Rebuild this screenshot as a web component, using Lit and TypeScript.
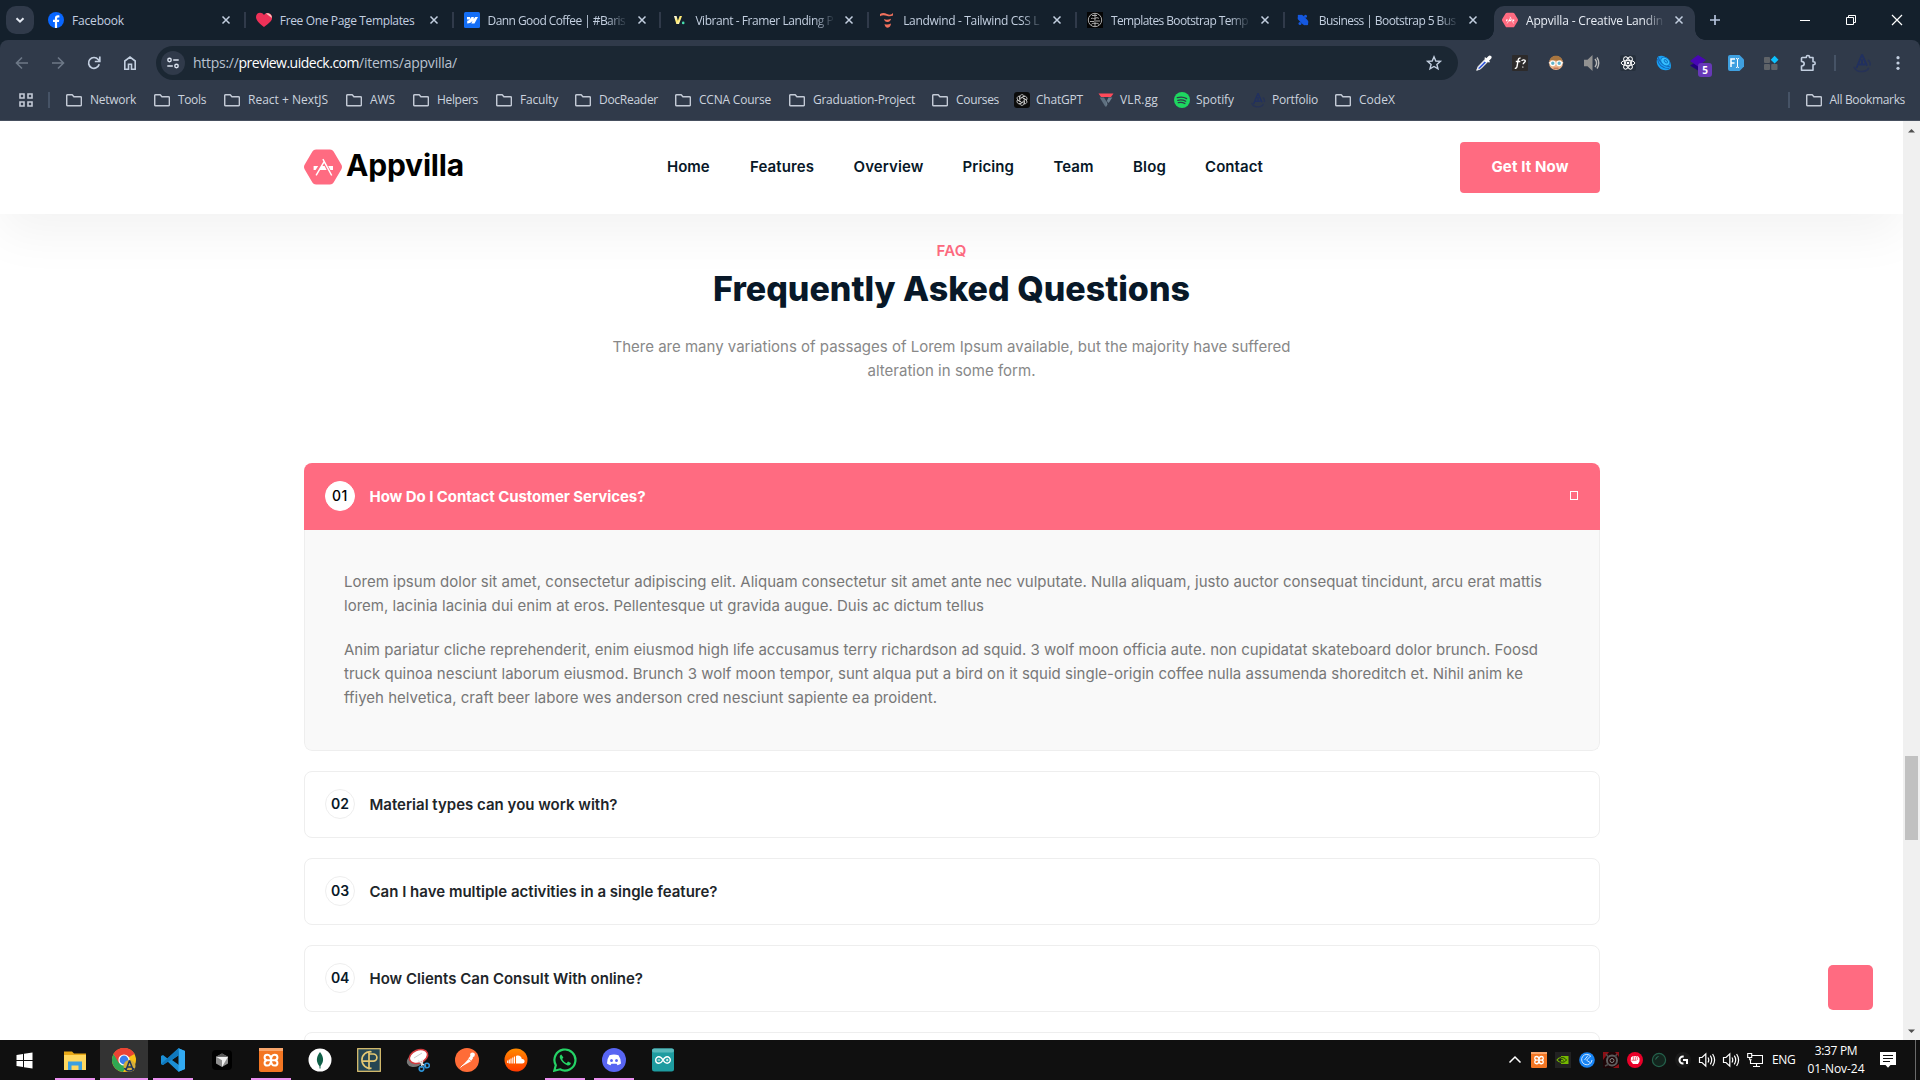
import { LitElement, html, css, svg, nothing, TemplateResult } from "lit";
import { customElement, property } from "lit/decorators.js";
import { classMap } from "lit/directives/class-map.js";
import { styleMap } from "lit/directives/style-map.js";

/** Inline text whose tracking is adjusted so that it spans `width` pixels. */
@customElement("fit-text")
class FitText extends LitElement {
  @property({ type: Number }) width = 0;
  @property() text = "";
  static styles = css`
    :host { display: inline-block; white-space: pre; }
    .run { display: inline-block; }
  `;
  render() {
    return html`<span class="run">${this.text}</span>`;
  }
  updated() {
    const run = this.renderRoot.querySelector<HTMLElement>(".run")!;
    run.style.letterSpacing = "0px";
    if (this.width > 0) {
      const natural = run.getBoundingClientRect().width;
      run.style.letterSpacing = `${(this.width - natural) / this.text.length}px`;
    }
  }
}

const fit = (text: string, width: number) =>
  html`<fit-text .text=${text} .width=${width}></fit-text>`;

type Art = ReturnType<typeof svg>;
const icon = (size: number, box: string, art: Art): TemplateResult =>
  html`<svg width=${size} height=${size} viewBox=${box} fill="none">${art}</svg>`;

const hexMark = (size: number) => icon(size, "0 0 38 38", svg`
  <path d="M12 1.500h14q2.400 0 3.600 2l7.800 13.300q1.200 2.200 0 4.400l-7.800 13.300q-1.200 2-3.600 2h-14q-2.400 0-3.600-2l-7.800-13.300q-1.200-2.200 0-4.400l7.800-13.300q1.200-2 3.600-2z" fill="#ff6b81"/>
  <path d="M9.600 18h4.600l-2.600 4h-2zM24.200 18h4.800v4h-2.600zM17.600 18h3l2 4h-7.400z" fill="#fff"/>
  <path d="M20.300 13.300l-8.200 14M18.900 11.200l8.800 16.300" stroke="#fff" stroke-width="1.500"/>`);

const asMark = (size: number) => icon(size, "0 0 16 16", svg`
  <path d="M8 1.200L3.600 12M8 1.200l4 9M5.500 9.200h5M8 5v4" stroke="#21305f" stroke-width="1.500"/>
  <path d="M1.600 11c1 3 3.300 4 6.400 3.800s5-1.400 5.300-3M12.800 5.500c1.500 1.200 2 3 1.600 4.600" stroke="#263257" stroke-width="1.200"/>`);

const folder = icon(16, "0 0 16 16", svg`<path d="M1.600 2.700h4.600l1.700 2h6.500q1 0 1 1v7q0 1-1 1H1.700q-1 0-1-1v-9q0-1 .9-1z" stroke="#c3cad6" stroke-width="1.500" stroke-linejoin="round"/>`);

const xampp = (size: number) => icon(size, "0 0 24 24", svg`
  <rect width="24" height="24" rx="2" fill="#f37623"/><rect x="0" y="0" width="24" height="3" fill="#f9a66c"/>
  <path d="M8 12.200c-3.300-.6-3.300-5.400.3-5.400 2.200 0 3.600 2 3.700 5.400-.1 3.400-1.500 5.400-3.700 5.400-3.600 0-3.600-4.800-.3-5.400M16 12.200c3.300-.6 3.300-5.400-.3-5.400-2.200 0-3.600 2-3.700 5.400.1 3.400 1.500 5.400 3.700 5.400 3.600 0 3.600-4.800.3-5.400M8 12.200h8" stroke="#fff" stroke-width="2"/>`);

const favicon: Record<string, TemplateResult> = {
  facebook: icon(16, "0 0 16 16", svg`<circle cx="8" cy="8" r="8" fill="#0866ff"/><path d="M6.900 15.900V10H5V7.700h1.900V6.500c0-2.200 1-3.200 3.100-3.200.5 0 1.100.1 1.400.2v2h-.9c-1 0-1.400.4-1.400 1.300v.9h2.200L10.900 10H9.100v5.900z" fill="#fff"/>`),
  heart: icon(16, "0 0 16 16", svg`<path d="M8 15C3.500 11.500 0 8.500 0 5c0-5 6-5.500 8-2 1-1.800 3-2.600 5-1.800C17 3 17 7 14.500 9.500 12.500 11.500 10 13.500 8 15z" fill="#ee3158"/><path d="M10 1.500c2.500-.7 6 1 5.800 4.500z" fill="#f7c5bd"/>`),
  webflow: icon(16, "0 0 16 16", svg`<rect width="16" height="16" rx="1.500" fill="#146ef5"/><path d="M14 5l-3.500 6.500H7.300l1.300-2.800C7.500 10.300 5.800 11.300 3.200 11.500V8.700s1.600-.1 2.600-1.200H3V5h3.100v2L7.500 5h2.300v2L11.200 5z" fill="#fff"/>`),
  vibrant: icon(16, "0 0 16 16", svg`<defs><linearGradient id="vg" x1="0" y1="0" x2="1" y2="1"><stop stop-color="#fff"/><stop offset=".5" stop-color="#ffe96a"/><stop offset="1" stop-color="#fff"/></linearGradient></defs><path d="M3 4h2.600l1.300 4.700L8.700 4H11L8 12H5.300z" fill="url(#vg)"/><circle cx="12.200" cy="10.900" r="1.300" fill="#47e0b0"/>`),
  landwind: icon(16, "0 0 16 16", svg`<path d="M1 2q3.200-2 7 0t6-1v2.500q-3 1.500-6.500.2T1 4.200zM5 7q2.500 1.500 7-.2-.4 3-3.500 3.200Q5.500 10 5 7zM5.500 12q3 1.300 6.500-.4-.5 4-3.200 4.200Q6 15.500 5.500 12z" fill="#f0705c"/>`),
  templates: icon(16, "0 0 16 16", svg`<rect width="16" height="16" fill="#050505"/><circle cx="8" cy="8" r="6.700" stroke="#aaa"/><path d="M8 1.500v13M5 3.500h5M4 6.500c2-1 3 1 4 0s3-1 4 0M3 9.500h4M9 9h4M4.500 12.500c1-2 2-1 3.500-1s2.500-1 4 1" stroke="#aaa"/>`),
  business: icon(16, "0 0 16 16", svg`<rect x="2" y="4.800" width="12" height="6.400" rx="3.200" transform="rotate(45 8 8)" fill="#1558e0"/><circle cx="10.500" cy="4.200" r="1.500" fill="#1558e0"/><circle cx="5" cy="11.500" r="1.500" fill="#1558e0"/><circle cx="4" cy="4" r="1.300" fill="#1558e0"/><circle cx="11.900" cy="11.900" r="1.300" fill="#1558e0"/>`),
  appvilla: hexMark(16),
  gpt: icon(16, "0 0 16 16", svg`<rect width="16" height="16" rx="3" fill="#0b0b0b"/>${[0, 60, 120, 180, 240, 300].map(a => svg`<path transform="rotate(${a} 8 8)" d="M5.900 8.500V4.800q.1-2 2-2.200 1.600 0 2.400 1.400L7.200 5.800" stroke="#d5d5d5" stroke-width=".8"/>`)}`),
  vlr: icon(16, "0 0 16 16", svg`<path d="M.5 1.500h15L13 5H3z" fill="#ff4a5a"/><path d="M1.700 5.500h4.300L9.500 11l-2 4z" fill="#5f7080"/><path d="M14.300 5.500H10.500L8.800 9l1.900 2zM8 9.500l1.500 2.800L8.300 15z" fill="#6f8090"/>`),
  spotify: icon(16, "0 0 16 16", svg`<circle cx="8" cy="8" r="8" fill="#1ed760"/><path d="M3.300 5.700c3.200-.9 6.700-.6 9.300.9M3.800 8.300c2.700-.7 5.600-.4 7.900.9M4.300 10.700c2.200-.5 4.600-.3 6.600.8" stroke="#2f3a4a" stroke-width="1.300" stroke-linecap="round"/>`),
  portfolio: asMark(16),
};

const closeX = icon(16, "0 0 16 16", svg`<path d="M4.500 4.500l7 7M11.500 4.500l-7 7" stroke="#c3cfe0" stroke-width="1.500"/>`);

const tabs: [string, string, number][] = [
  ["facebook", "Facebook", 52],
  ["heart", "Free One Page Templates", 134.500],
  ["webflow", "Dann Good Coffee | #Baris", 137.500],
  ["vibrant", "Vibrant - Framer Landing P", 138],
  ["landwind", "Landwind - Tailwind CSS L", 136],
  ["templates", "Templates Bootstrap Temp", 137],
  ["business", "Business | Bootstrap 5 Bus", 137],
  ["appvilla", "Appvilla - Creative Landin", 137],
];

/* [icon, label, label width, distance to the next item] */
const bookmarks: [string, string, number, number][] = [
  ["folder", "Network", 46, 88], ["folder", "Tools", 28, 70], ["folder", "React + NextJS", 80, 122],
  ["folder", "AWS", 25, 67], ["folder", "Helpers", 41, 83], ["folder", "Faculty", 38, 79],
  ["folder", "DocReader", 59, 100], ["folder", "CCNA Course", 72, 114],
  ["folder", "Graduation-Project", 102, 143], ["folder", "Courses", 43, 82],
  ["gpt", "ChatGPT", 47, 84], ["vlr", "VLR.gg", 38, 76], ["spotify", "Spotify", 38, 76],
  ["portfolio", "Portfolio", 46, 85], ["folder", "CodeX", 36, 60],
];

const extensions: TemplateResult[] = [
  icon(16, "0 0 16 16", svg`<path d="M9.700 3.800L2.300 11.400.7 15.300l4-1.500 7.500-7.600z" fill="#fff" stroke="#f4f4f4"/><path d="M8.600 6.500L3 12.300l-.8 1.900 1.800-.8 6-6z" fill="#2f55d8"/><path d="M8.200 3l4.800 4.800 1-1-1-1 2-2Q16.300 2 15 .9q-1.400-1-2.700.3l-2 2-1-1z" fill="#fff"/>`),
  icon(16, "0 0 16 16", svg`<rect width="16" height="16" rx="1" fill="#2d2b2b"/><path d="M8.600 3.200C6.800 2.700 6.300 4 6 6L5 11.500c-.2 1.500-1 2-2.200 1.600M3.800 6.500h4.500M9.800 6c.3-1.700 3.800-1.500 3.400.3-.3 1.200-1.900 1.300-2 2.900M10.900 11.700l-.1.800" stroke="#fff" stroke-width="1.400"/>`),
  icon(16, "0 0 16 16", svg`<circle cx="8" cy="8" r="7" fill="#eab48a"/><path d="M1.300 6.500C2 2.500 5 .7 8 .7s6 1.800 6.700 5.800l-2-1.500L9 5.800 3 5z" fill="#a8753f"/><circle cx="4.800" cy="8.300" r="2.300" fill="#63b3c8" stroke="#fff" stroke-width="1.200"/><circle cx="11.200" cy="8.300" r="2.300" fill="#63b3c8" stroke="#fff" stroke-width="1.200"/><path d="M.8 7.800h1.500M13.700 7.800h1.500" stroke="#fff"/><path d="M5.500 13.200h5" stroke="#b55e45"/>`),
  icon(16, "0 0 16 16", svg`<path d="M0 4.700h3.500l5-4.700v16l-5-4.700H0z" fill="#929292"/><path d="M11 4q3.200 4 0 8M13 2.500q3.500 5.500 0 11" stroke="#b9b9b9" stroke-width="1.400"/>`),
  icon(16, "0 0 16 16", svg`<rect width="16" height="16" rx="2" fill="#26303d"/><circle cx="8" cy="8" r="1.300" fill="#fff"/><g stroke="#fff"><ellipse cx="8" cy="8" rx="6.800" ry="2.700"/><ellipse cx="8" cy="8" rx="6.800" ry="2.700" transform="rotate(60 8 8)"/><ellipse cx="8" cy="8" rx="6.800" ry="2.700" transform="rotate(120 8 8)"/></g>`),
  icon(16, "0 0 16 16", svg`<path d="M2 1.500C6 0 9 1.200 12 4.300c3 3 3.600 6.300 2.300 9.700-4 2.500-9 1.300-11.500-2S0 5 2 1.500z" fill="#18a2f5"/><path d="M1.500 4c.5 5.500 5 9.500 11.700 9.800M2 2c1.500 5 6 9 12 10" stroke="#1565b8" stroke-width="1.100"/><ellipse cx="9.300" cy="6.500" rx="5" ry="3.700" transform="rotate(42 9.300 6.500)" fill="#38c0ff" stroke="#0d77c8"/><ellipse cx="9.800" cy="6.300" rx="2" ry="1.200" transform="rotate(42 9.800 6.300)" stroke="#0d77c8"/>`),
  html`<span class="ext-badge">${icon(16, "0 0 16 16", svg`<path d="M8 6l8 4.500-8 5-8-5z" fill="#21007a"/><path d="M8 0l8 5-8 6.500L0 6z" fill="#4806b4"/>`)}<b class="badge">5</b></span>`,
  icon(16, "0 0 16 16", svg`<path d="M2 0h9.500L16 4.500v7L11.500 16H2q-2 0-2-2V2q0-2 2-2z" fill="#3fa0e0"/><path d="M3 12V4h4M3 8h3.500" stroke="#fff" stroke-width="1.500"/><path d="M8 3.500q1.500 0 1.500 1v7q0 1-1.500 1M11 3.500q-1.500 0-1.500 1v7q0 1 1.500 1" stroke="#fff"/>`),
  icon(16, "0 0 16 16", svg`<rect x="0" y="2" width="6" height="6" rx="1" fill="#5f6368"/><rect x="0" y="9" width="6" height="6" rx="1" fill="#5f6368"/><rect x="7.200" y="9" width="6.300" height="6" rx="1" fill="#5f6368"/><path d="M10.600.8l3.900 3.900-3.900 3.900-3.900-3.900z" fill="#0cc1ff"/>`),
  icon(20, "0 0 20 20", svg`<path d="M4.300 4.500h4V4q0-1.500 1.600-1.500T11.500 4v.5H15v4.200h.6q1.600 0 1.600 1.500t-1.600 1.500H15v5.500H3.500V13q2.700 0 2.700-2.200T3.500 8.500V5.300q0-.8.8-.8z" stroke="#c3cfe0" stroke-width="1.600" stroke-linejoin="round"/>`),
];

const speaker = icon(18, "0 0 18 18", svg`<path d="M1.500 6.500H4l3.800-3.700v12.400L4 11.500H1.500z" stroke="#fff" stroke-width="1.200"/><path d="M10 6.500q1.500 2.500 0 5M12.300 4.700q2.800 4.300 0 8.600M14.600 3q4 6 0 12" stroke="#fff" stroke-width="1.200"/>`);

/* [art, running, focused] */
const apps: [TemplateResult, boolean, boolean][] = [
  [icon(24, "0 0 24 24", svg`<path d="M1 3.500h8l2 2h12V22H1z" fill="#e8a817"/><path d="M1 7h22v15H1z" fill="#ffd75e"/><path d="M5 13.500h14V22h-3.500v-4.500h-7V22H5z" fill="#3b9fe0"/>`), true, false],
  [icon(24, "0 0 24 24", svg`<circle cx="12" cy="12" r="12" fill="#fbc116"/><path d="M12 12L1.600 6A12 12 0 0 1 22.400 6z" fill="#ea4335"/><path d="M1.600 6A12 12 0 0 0 11 24l5.500-9.500L7 13z" fill="#30a853"/><path d="M12 6h10.400q-3-6-10.400-6T1.600 6l5.200 9z" fill="#ea4335"/><circle cx="12" cy="12" r="5.600" fill="#fff"/><circle cx="12" cy="12" r="4.400" fill="#3b7ded"/><circle cx="17.500" cy="18" r="6" fill="#d6ae3b"/><path d="M17.500 12.500L14 22M17.500 12.500l3.500 9M14.500 19h6M12.500 20c2 4 8 4 9.500 0" stroke="#20355c" stroke-width="1.500"/>`), true, true],
  [icon(24, "0 0 24 24", svg`<path d="M17.500.2L24 3v18l-6.500 2.800-11-10.300L2 17 0 16V8l2-1 4.500 3.500zM18 7l-7 5 7 5z" fill="#1b8fd6" fill-rule="evenodd"/><path d="M17.500.2L24 3v18l-6.500 2.800z" fill="#32aaf2"/><path d="M0 16l17.500-15.800L18 7 2 17z" fill="#0f78bd"/>`), true, false],
  [icon(24, "0 0 24 24", svg`<rect x="2" y="2" width="20" height="20" rx="4" fill="#000"/><path d="M12 5.500l6 3.300v6.800L12 19l-6-3.400V8.800z" fill="#8d8d8d"/><path d="M6 8.800h12L12 19v-6.700z" fill="#efefef"/><path d="M6 8.800l6-3.300 6 3.300z" fill="#555"/>`), false, false],
  [xampp(24), true, false],
  [icon(24, "0 0 24 24", svg`<circle cx="12" cy="12" r="11.500" fill="#fff"/><path d="M12 4c4.300 5.500 4 10.500-.2 14.500C8 14.500 7.700 9.500 12 4z" fill="#116149"/><path d="M12 12v8.500" stroke="#116149"/>`), false, false],
  [icon(24, "0 0 24 24", svg`<rect x=".7" y=".7" width="22.600" height="22.600" fill="#264653" stroke="#e5c873" stroke-width="1.200"/><path d="M14.500 3.800A8.300 8.300 0 1 0 14.500 20.200M12 3v18.500M12 6h4.300a3.600 3.600 0 0 1 0 7.200H5" stroke="#e5c873" stroke-width="1.700"/>`), false, false],
  [icon(24, "0 0 24 24", svg`<ellipse cx="10" cy="12" rx="9.500" ry="6.500" transform="rotate(-22 10 12)" fill="#777"/><ellipse cx="12.500" cy="8.500" rx="9.500" ry="6.500" transform="rotate(-22 12.500 8.500)" fill="#fff" stroke="#d33a3d" stroke-width="1.600"/><path d="M8 10l8-5" stroke="#ccc"/><path d="M12 12.500l8 6M16.500 11.500l-1 8" stroke="#e7e7e7" stroke-width="1.500"/><circle cx="15.500" cy="20.800" r="2.300" stroke="#2d93d7" stroke-width="1.600"/><circle cx="21" cy="17.500" r="2.300" stroke="#2d93d7" stroke-width="1.600"/>`), false, false],
  [icon(24, "0 0 24 24", svg`<circle cx="12" cy="12" r="12" fill="#ff6c37"/><path d="M6.500 18.500l7-7.500 2.500 2.200-7 4z" fill="#fff"/><path d="M13.300 10.500l2.500-3 2.500 2.300-2 3z" fill="#fff"/><circle cx="17.500" cy="6.800" r="2.400" fill="#fff"/><path d="M5.500 19.500l3-3" stroke="#fff"/>`), false, false],
  [icon(24, "0 0 24 24", svg`<defs><linearGradient id="sc" x2="0" y2="1"><stop stop-color="#ff8b00"/><stop offset="1" stop-color="#ff3a00"/></linearGradient></defs><circle cx="12" cy="12" r="11.500" fill="url(#sc)"/><path d="M12 8c3-1.300 5.500.5 5.800 3 1.700-.3 2.800.9 2.800 2.200s-1 2.300-2.400 2.300H12z" fill="#fff"/><path d="M10.500 8.500v7M8.800 9.500v6M7 10.500v5M5.300 11.500v4M3.700 12.500v2.500" stroke="#fff" stroke-width="1.100"/>`), false, false],
  [icon(24, "0 0 24 24", svg`<path d="M1.300 22.700l1.500-5.500A10.500 10.500 0 1 1 7 21.300z" stroke="#25d366" stroke-width="2.200"/><path d="M8.300 6.500c-1.300.5-2 2-1.300 3.800 1.300 3.300 3.800 5.800 7.200 7 2 .6 3.500-.4 3.700-2.200l-2.900-1.500-1.300 1.600c-2.200-.9-3.700-2.400-4.500-4.300l1.200-1.300z" fill="#25d366"/>`), true, false],
  [icon(24, "0 0 24 24", svg`<circle cx="12" cy="12" r="12" fill="#5865f2"/><path d="M7.500 7.200q4.500-1.400 9 0 2.800 4 2.500 8.300-1.500 1.300-3.500 1.700l-.9-1.400h-5.200l-.9 1.400Q6.500 16.800 5 15.500q-.3-4.300 2.500-8.300z" fill="#fff"/><ellipse cx="9.500" cy="12.500" rx="1.400" ry="1.500" fill="#5865f2"/><ellipse cx="14.500" cy="12.500" rx="1.400" ry="1.500" fill="#5865f2"/>`), true, false],
  [icon(24, "0 0 24 24", svg`<rect x="1" y=".5" width="22" height="23" rx="2.500" fill="#1e9ca0"/><rect x="1" y=".5" width="22" height="4" rx="2" fill="#57b9bb"/><path d="M12 12C10.500 9.500 9.300 8.800 7.900 8.800a3.200 3.200 0 1 0 0 6.400c1.400 0 2.600-.7 4.100-3.200s2.700-3.200 4.100-3.200a3.200 3.200 0 1 1 0 6.400c-1.400 0-2.600-.7-4.100-3.200z" stroke="#fff" stroke-width="1.400"/><path d="M6.700 12h2.400M15 12h2.400M16.200 10.800v2.400" stroke="#fff" stroke-width=".9"/>`), false, false],
];

const tray: TemplateResult[] = [
  xampp(16),
  icon(16, "0 0 16 16", svg`<rect width="16" height="16" fill="#222"/><path d="M6 4h7.500v8H6z" fill="#76b900"/><path d="M2 8C4 4.800 8 4.500 11.500 8 9 11.300 4.500 11.300 2 8z" stroke="#76b900" stroke-width="1.200"/><path d="M6 5.800c2-.8 4 .2 5.500 2.200-1 1.500-3 2.700-5.500 2M6 7.500c1.500-.5 2 0 2.500 1" stroke="#1c2b08" stroke-width=".9"/>`),
  icon(16, "0 0 16 16", svg`<circle cx="8" cy="8" r="7.800" fill="#1784f5"/><path d="M12 4.500A5.200 5.200 0 1 0 13 8M11.500 4L7.500 8.200l4 2.600M9 3.500L5.500 8" stroke="#c9e4ff" stroke-width="1"/>`),
  icon(16, "0 0 16 16", svg`<rect width="16" height="16" fill="#1d0507"/><path d="M0 0h6L0 8zM12 0h4v5zM10 16l6-4v4z" fill="#8c1016"/><circle cx="9" cy="8.500" r="5" stroke="#5e5e5e" stroke-width="2"/><circle cx="9" cy="8.500" r="2" stroke="#858585"/><path d="M3 2l3 4M14 2l-2 3M2 14l4-2" stroke="#4b4b4b" stroke-width="1.500"/>`),
  icon(16, "0 0 16 16", svg`<circle cx="8" cy="8" r="8" fill="#ea0029"/><path d="M4 5.500l1.500-1.300 1.300.3L8 4l1.300.6 1.700-.3 1.500 2v3L11 12H6L3.700 9z" fill="#fff"/><path d="M6.300 5v3M8.300 5v3M10.300 5v3M4.500 8.300h5" stroke="#ea0029" stroke-width=".6"/>`),
  icon(16, "0 0 16 16", svg`<circle cx="8" cy="8" r="6.600" fill="#13251e" stroke="#24614b" stroke-width="1.200"/><path d="M4.700 7.500q.3-2.500 2.800-3" stroke="#2f7b61"/>`),
  icon(16, "0 0 16 16", svg`<circle cx="8" cy="8" r="8" fill="#1a1a1a"/><path d="M8.700 4.500H8a3.500 3.500 0 1 0 0 7h.5M8 8h4v4" stroke="#fff" stroke-width="2"/>`),
  speaker,
  speaker,
  icon(16, "0 0 16 16", svg`<path d="M5 3.500h10.500v8H3.500V8M9.500 11.500v3M6 14.500h7M.7 1.500h4v4h-4zM2.700 5.500v2.300h2" stroke="#fff" stroke-width="1.100"/>`),
];

const navLinks: [string, number, number][] = [
  ["Home", 42.500, 83], ["Features", 64, 103.500], ["Overview", 70, 109], ["Pricing", 51.500, 91],
  ["Team", 40, 79.500], ["Blog", 33, 72], ["Contact", 58, 58],
];

const questions: [string, string, number][] = [
  ["02", "Material types can you work with?", 248],
  ["03", "Can I have multiple activities in a single feature?", 348],
  ["04", "How Clients Can Consult With online?", 273.500],
  ["05", "", 0],
];

@customElement("browser-chrome")
class BrowserChrome extends LitElement {
  static styles = css`
    :host { display: block; height: 121px; background: #14202c; color: #c3cfe0; font: 12px/16px "Open Sans", "Noto Sans", sans-serif; box-sizing: border-box; }
    svg { display: block; flex: none; }
    .strip { display: flex; height: 40px; align-items: center; }
    .search { width: 28px; height: 28px; margin: 0 4px 0 6px; border-radius: 10px; background: #303a4a; display: grid; place-items: center; }
    .tab { position: relative; box-sizing: border-box; width: 207.800px; height: 40px; padding: 0 11.800px 0 10px; display: flex; align-items: center; flex: none; }
    .tab::after { content: ""; position: absolute; right: 0; top: 12px; width: 2px; height: 16px; background: #303a4a; }
    .tab.no-sep::after { display: none; }
    .label { margin: 1px 8px 0 8px; flex: 1; -webkit-mask-image: linear-gradient(90deg, #000 86%, rgba(0, 0, 0, .1)); mask-image: linear-gradient(90deg, #000 86%, rgba(0, 0, 0, .1)); white-space: nowrap; min-width: 0; }
    .label.full { -webkit-mask-image: none; mask-image: none; }
    .tab.active { margin-left: 1.400px; width: 201px; padding: 6px 8px 0 8px; height: 40px; color: #e8edf5; }
    .tab.active .label { margin-top: -5px; position: relative; }
    .tab.active > svg { margin-top: -6px; position: relative; }
    .shape { position: absolute; inset: 6px 0 0 0; border-radius: 10px 10px 0 0; background: #303a4a; }
    .shape::before, .shape::after { content: ""; position: absolute; bottom: 0; width: 10px; height: 10px; }
    .shape::before { left: -10px; background: radial-gradient(circle at 0 0, transparent 9.500px, #303a4a 10px); }
    .shape::after { right: -10px; background: radial-gradient(circle at 100% 0, transparent 9.500px, #303a4a 10px); }
    .plus { margin-left: 12px; }
    .window { margin-left: auto; display: flex; }
    .window span { width: 46px; display: grid; place-items: center; }
    .bars { height: 81px; box-sizing: border-box; background: #303a4a; border-radius: 8px 8px 0 0; border-bottom: 1px solid #464f5e; }
    .toolbar { display: flex; align-items: center; height: 46px; }
    .nav { display: flex; gap: 16px; padding-left: 12px; }
    .omnibox { margin-left: 16px; width: 1302px; height: 34px; box-sizing: border-box; padding: 0 14px 0 5px; border-radius: 17px; background: #1b2733; display: flex; align-items: center; font-size: 14px; line-height: 20px; color: #b9c2d0; }
    .site { width: 24px; height: 24px; border-radius: 50%; background: #303a4a; display: grid; place-items: center; margin-right: 8px; }
    .host { color: #fff; }
    .omnibox > svg { margin-left: auto; }
    .exts { display: flex; margin-left: 8px; }
    .exts > span { width: 36px; height: 36px; display: grid; place-items: center; }
    .ext-badge { position: relative; }
    .ext-badge > svg { margin-right: 4px; }
    .badge { position: absolute; left: 8px; top: 8px; width: 14px; height: 14px; border-radius: 3px; background: #6739b7; color: #fff; font: bold 10px/14px "Open Sans", sans-serif; text-align: center; }
    .rule { width: 2px; height: 16px; background: #465366; flex: none; }
    .exts + .rule { margin: 0 16px 0 8px; }
    .kebab { margin-left: 16px; }
    .marks { display: flex; align-items: center; height: 28px; padding: 0 15px 0 18px; color: #ccd3de; }
    .marks > .rule { margin: 0 16px 0 14px; }
    .mark { display: flex; align-items: center; gap: 8px; flex: none; white-space: nowrap; }
    .mark.site-mark { gap: 6px; }
    .mark.all { margin-left: auto; }
    .mark.all .rule { margin-right: 8px; }
  `;
  render() {
    return html`
      <div class="strip">
        <span class="search">${icon(12, "0 0 12 12", svg`<path d="M2.500 4.200L6 7.700l3.500-3.500" stroke="#e3e9f2" stroke-width="2"/>`)}</span>
        ${tabs.map(([name, label, width], i) => html`
          <div class=${classMap({ tab: true, active: i === 7, "no-sep": i > 5 })}>
            ${i === 7 ? html`<span class="shape"></span>` : nothing}
            ${favicon[name]}
            <span class=${classMap({ label: true, full: i < 2 })}>${fit(label, width)}</span>
            ${closeX}
          </div>`)}
        <span class="plus">${icon(16, "0 0 16 16", svg`<path d="M8 3v10M3 8h10" stroke="#b5c3dc" stroke-width="1.700"/>`)}</span>
        <div class="window">
          <span>${icon(12, "0 0 12 12", svg`<path d="M1 6.500h10" stroke="#fff"/>`)}</span>
          <span>${icon(12, "0 0 12 12", svg`<path d="M1.500 3.500h7v7h-7zM3.500 3.500v-2h7v7h-2" stroke="#fff"/>`)}</span>
          <span>${icon(12, "0 0 12 12", svg`<path d="M1 1l10 10M11 1L1 11" stroke="#fff" stroke-width="1.200"/>`)}</span>
        </div>
      </div>
      <div class="bars">
        <div class="toolbar">
          <div class="nav">
            ${icon(20, "0 0 20 20", svg`<path d="M16 10H5M10 4.500L4.500 10l5.500 5.500" stroke="#6d7887" stroke-width="1.600"/>`)}
            ${icon(20, "0 0 20 20", svg`<path d="M4 10h11M10 4.500l5.500 5.500-5.500 5.500" stroke="#6d7887" stroke-width="1.600"/>`)}
            ${icon(20, "0 0 20 20", svg`<path d="M15.200 11.300A5.400 5.400 0 1 1 14.200 6.500l1.300 1.700" stroke="#c3cfe0" stroke-width="1.700"/><path d="M15.800 3.500v5h-5" stroke="#c3cfe0" stroke-width="1.700"/>`)}
            ${icon(20, "0 0 20 20", svg`<path d="M4.800 16.300V8L10 4l5.200 4v8.300h-3.700v-5h-3v5z" stroke="#c3cfe0" stroke-width="1.600"/>`)}
          </div>
          <div class="omnibox">
            <span class="site">${icon(14, "0 0 14 14", svg`<circle cx="3.500" cy="4" r="1.700" stroke="#dbe3ef" stroke-width="1.400"/><path d="M7.200 4h5.500M1.300 10h5.500" stroke="#dbe3ef" stroke-width="1.500"/><circle cx="10.500" cy="10" r="1.700" stroke="#dbe3ef" stroke-width="1.400"/>`)}</span>
            ${fit("https://", 45.500)}<span class="host">${fit("preview.uideck.com", 120.500)}</span>${fit("/items/appvilla/", 98)}
            ${icon(20, "0 0 20 20", svg`<path d="M10 3.800l1.800 4.200 4.600.4-3.500 3 1.100 4.500-4-2.400-4 2.400 1.100-4.500-3.500-3 4.600-.4z" stroke="#c3cfe0" stroke-width="1.400"/>`)}
          </div>
          <div class="exts">${extensions.map(e => html`<span>${e}</span>`)}</div>
          <span class="rule"></span>
          ${asMark(20)}
          <span class="kebab">${icon(20, "0 0 20 20", svg`<circle cx="10" cy="4.700" r="1.600" fill="#c3cfe0"/><circle cx="10" cy="10" r="1.600" fill="#c3cfe0"/><circle cx="10" cy="15.300" r="1.600" fill="#c3cfe0"/>`)}</span>
        </div>
        <div class="marks">
          ${icon(16, "0 0 16 16", svg`<path d="M2 2h4v4H2zM10 2h4v4h-4zM2 10h4v4H2zM10 10h4v4h-4z" stroke="#c3cad6" stroke-width="1.600"/>`)}
          <span class="rule"></span>
          ${bookmarks.map(([name, label, width, step]) => html`
            <span class=${classMap({ mark: true, "site-mark": name !== "folder" })} style=${styleMap({ width: `${step}px` })}>
              ${name === "folder" ? folder : favicon[name]}${fit(label, width)}
            </span>`)}
          <span class="mark all"><span class="rule"></span>${folder}${fit("All Bookmarks", 75.500)}</span>
        </div>
      </div>`;
  }
}

@customElement("site-page")
class SitePage extends LitElement {
  static styles = css`
    :host { display: block; width: 1903px; height: 919px; overflow: hidden; background: #fff; font: 15px/24px Inter, sans-serif; position: relative; }
    svg { display: block; flex: none; }
    .header { position: relative; height: 93px; box-sizing: border-box; padding: 0 303px 0 304px; display: flex; align-items: center; background: #fff; box-shadow: 0 20px 50px rgba(0, 0, 0, .05); }
    .brand { display: flex; align-items: center; gap: 4px; font-size: 30px; font-weight: 700; line-height: 40px; color: #000; width: 363px; margin-top: -2px; }
    .brand fit-text { margin-top: -4px; }
    .links { display: flex; font-size: 15px; font-weight: 600; color: #081828; margin-top: -1px; }
    .cta { margin-left: auto; width: 140px; height: 51px; border-radius: 4px; background: #ff6b81; color: #fff; font-weight: 700; font-size: 15px; display: grid; place-items: center; box-sizing: border-box; padding-bottom: 1px; }
    .intro { padding-top: 25px; text-align: center; }
    .kicker { font-size: 15px; font-weight: 600; color: #ff6b81; line-height: 24px; }
    .title { font-size: 34px; font-weight: 800; line-height: 44px; color: #081828; margin-top: 4px; }
    .lead { color: #888; margin-top: 24px; }
    .lead div { height: 24px; }
    .faq { margin: 80px 303px 0 304px; display: flex; flex-direction: column; gap: 20px; }
    .item { box-sizing: border-box; border: 1px solid #eee; border-radius: 8px; overflow: hidden; }
    .head { height: 65px; box-sizing: border-box; padding: 0 20px 1px; display: flex; align-items: center; font-weight: 600; font-size: 15px; color: #212529; }
    .head > fit-text { margin-top: 2px; }
    .num { width: 30px; height: 30px; box-sizing: border-box; border: 1px solid #eee; border-radius: 50%; display: grid; place-items: center; margin-right: 14.500px; font-size: 14px; font-weight: 600; color: #081828; background: #fff; }
    .open { border: 0; }
    .open .head { height: 67px; padding: 0 22px 1px 21px; background: #ff6b81; color: #fff; font-weight: 700; }
    .open .num { color: #000; border-color: #fff; font-weight: 500; }
    .missing { margin: 0 0 1px auto; width: 8px; height: 9px; box-sizing: border-box; border: 1px solid #fff; }
    .body { height: 221px; box-sizing: border-box; border: 1px solid #eee; border-top: 0; border-radius: 0 0 8px 8px; background: #f9f9f9; padding: 40px 39px; color: #777; }
    .body p { margin: 0 0 20px; }
    .body fit-text { display: block; height: 24px; }
    .top { position: absolute; left: 1828px; top: 844px; width: 45px; height: 45px; border-radius: 5px; background: #ff6b81; }
  `;
  render() {
    return html`
      <div class="header">
        <div class="brand">${hexMark(38)}${fit("Appvilla", 118)}</div>
        <nav class="links">${navLinks.map(([label, width, step]) => html`<span style=${styleMap({ width: `${step}px` })}>${fit(label, width)}</span>`)}</nav>
        <div class="cta">${fit("Get It Now", 77)}</div>
      </div>
      <div class="intro">
        <div class="kicker">${fit("FAQ", 30)}</div>
        <div class="title">${fit("Frequently Asked Questions", 477)}</div>
        <div class="lead">
          <div>${fit("There are many variations of passages of Lorem Ipsum available, but the majority have suffered", 678)}</div>
          <div>${fit("alteration in some form.", 168)}</div>
        </div>
      </div>
      <div class="faq">
        <div class="item open">
          <div class="head"><span class="num">${fit("01", 16)}</span>${fit("How Do I Contact Customer Services?", 276)}<span class="missing"></span></div>
          <div class="body">
            <p>${fit("Lorem ipsum dolor sit amet, consectetur adipiscing elit. Aliquam consectetur sit amet ante nec vulputate. Nulla aliquam, justo auctor consequat tincidunt, arcu erat mattis", 1198)}
            ${fit("lorem, lacinia lacinia dui enim at eros. Pellentesque ut gravida augue. Duis ac dictum tellus", 640)}</p>
            <p>${fit("Anim pariatur cliche reprehenderit, enim eiusmod high life accusamus terry richardson ad squid. 3 wolf moon officia aute. non cupidatat skateboard dolor brunch. Foosd", 1194)}
            ${fit("truck quinoa nesciunt laborum eiusmod. Brunch 3 wolf moon tempor, sunt alqua put a bird on it squid single-origin coffee nulla assumenda shoreditch et. Nihil anim ke", 1179)}
            ${fit("ffiyeh helvetica, craft beer labore wes anderson cred nesciunt sapiente ea proident.", 593)}</p>
          </div>
        </div>
        ${questions.map(([n, q, width]) => html`
          <div class="item"><div class="head"><span class="num">${fit(n, 18)}</span>${fit(q, width)}</div></div>`)}
      </div>
      <div class="top"></div>`;
  }
}

@customElement("task-bar")
class TaskBar extends LitElement {
  static styles = css`
    :host { display: flex; height: 40px; background: #101010; color: #fff; font: 12px/18px "Open Sans", "Noto Sans", sans-serif; }
    svg { display: block; flex: none; }
    .start { width: 51px; padding-left: 16px; box-sizing: border-box; display: flex; align-items: center; }
    .apps { display: flex; gap: 1px; }
    .app { position: relative; width: 48px; height: 40px; display: grid; place-items: center; }
    .app.focused { background: #333; }
    .app.running::after { content: ""; position: absolute; bottom: 0; left: 4px; right: 4px; height: 2px; background: #ea90f0; }
    .app.focused::after { left: 0; right: 0; }
    .tray { margin-left: auto; display: flex; align-items: center; }
    .cell { width: 24px; height: 24px; display: grid; place-items: center; }
    .lang { margin: 0 11px 0 5px; width: 24px; }
    .clock { width: 58px; text-align: center; margin-right: 15px; }
    .note { margin-right: 19px; }
    .edge { width: 1px; height: 40px; background: #6a6a6a; margin-right: 4px; }
  `;
  render() {
    return html`
      <div class="start">${icon(17, "0 0 17 17", svg`<path d="M.5 3l6.500-1v6H.5zM8 1.800L16.500.5V8H8zM.5 9H7v6.100l-6.500-1zM8 9h8.500v7.500L8 15.200z" fill="#fff"/>`)}</div>
      <div class="apps">${apps.map(([art, running, focused]) => html`<span class=${classMap({ app: true, running, focused })}>${art}</span>`)}</div>
      <div class="tray">
        <span class="cell">${icon(14, "0 0 14 14", svg`<path d="M1.500 9.500L7 4l5.500 5.500" stroke="#fff" stroke-width="1.500"/>`)}</span>
        ${tray.map(t => html`<span class="cell">${t}</span>`)}
        <span class="lang">${fit("ENG", 23.500)}</span>
        <div class="clock">${fit("3:37 PM", 42.500)}${fit("01-Nov-24", 57)}</div>
        <span class="note">${icon(16, "0 0 16 16", svg`<path d="M0 0h16v13H10.500L8 15.800 5.500 13H0z" fill="#fff"/><path d="M3 3.500h10M3 6.500h10M3 9.500h7" stroke="#101010" stroke-width="1.100"/>`)}</span>
        <span class="edge"></span>
      </div>`;
  }
}

@customElement("app-root")
class AppRoot extends LitElement {
  static styles = css`
    :host { display: block; width: 1920px; height: 1080px; overflow: hidden; }
    .view { display: flex; height: 919px; }
    .scroll { width: 17px; height: 919px; box-sizing: border-box; background: #f0f0f0; display: flex; flex-direction: column; align-items: center; padding: 6px 0 5px; }
    .scroll svg { display: block; flex: none; }
    .thumb { width: 13px; height: 84px; background: #c1c1c1; margin-top: 622px; }
    .down { margin-top: auto; }
  `;
  render() {
    return html`
      <browser-chrome></browser-chrome>
      <div class="view">
        <site-page></site-page>
        <div class="scroll">
          ${icon(7, "0 0 7 7", svg`<path d="M0 5.500h7L3.500 2z" fill="#505050"/>`)}
          <span class="thumb"></span>
          <span class="down">${icon(7, "0 0 7 7", svg`<path d="M0 1.500h7L3.500 5z" fill="#505050"/>`)}</span>
        </div>
      </div>
      <task-bar></task-bar>`;
  }
}
